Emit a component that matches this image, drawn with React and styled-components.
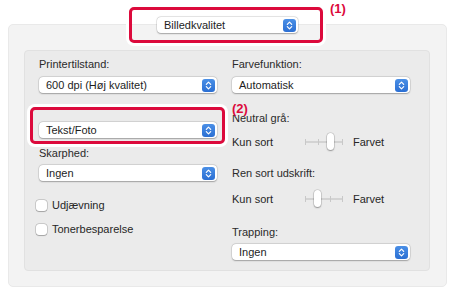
import React from 'react'
import styled, { createGlobalStyle } from 'styled-components'

const GlobalStyle = createGlobalStyle`
    html, body {
        margin: 0;
        padding: 0;
        background: #ffffff;
    }
    body {
        font-family: "Liberation Sans", Arial, sans-serif;
        font-size: 11px;
        color: #262626;
    }
`

const red = '#dc0a3c'

const Page = styled.div`
    width: 452px;
    height: 301px;
    padding-top: 7px;
    box-sizing: border-box;
    overflow: hidden;
`

const Header = styled.div`
    position: relative;
    z-index: 2;
    display: flex;
    justify-content: center;
    margin-bottom: -19px;
`

const Callout = styled.div`
    position: relative;
    z-index: 2;
    border: 3px solid ${red};
    border-radius: 5px;
    box-shadow: 0 0 0 3px #ffffff;
    padding: ${p => p.$pad};
    margin: ${p => p.$margin || '0'};
`

const Marker = styled.span`
    position: absolute;
    left: ${p => p.$left}px;
    top: ${p => p.$top}px;
    font-size: 13px;
    line-height: 13px;
    font-weight: bold;
    color: ${red};
    background: ${p => p.$bg || 'transparent'};
    white-space: nowrap;
`

const OuterPanel = styled.div`
    margin-left: 8px;
    width: 439px;
    height: 263px;
    box-sizing: border-box;
    padding: 25px 16px 15px 15px;
    background: #f3f3f3;
    border: 1px solid #e9e9e9;
    border-radius: 5px;
    display: flex;
`

const InnerPanel = styled.div`
    flex: 1;
    box-sizing: border-box;
    padding: 6px 0 0 14px;
    background: #ebebeb;
    border: 1px solid #e1e1e1;
    border-radius: 4px;
    display: grid;
    grid-template-columns: 178px 178px;
    column-gap: 15px;
    align-items: start;
`

const Column = styled.div`
    display: flex;
    flex-direction: column;
`

const Label = styled.div`
    height: 14px;
    line-height: 14px;
    margin-top: ${p => p.$mt || 0}px;
    white-space: nowrap;
    color: #2a2a2a;
`

const PopupBox = styled.div`
    display: flex;
    align-items: center;
    justify-content: space-between;
    height: 16px;
    box-sizing: border-box;
    padding: 0 2px 0 7px;
    margin-top: ${p => p.$mt || 0}px;
    width: ${p => (p.$w ? `${p.$w}px` : 'auto')};
    background: #ffffff;
    border-radius: 4px;
    box-shadow: 0 0 0 0.5px rgba(0, 0, 0, 0.12), 0 0.5px 1.5px rgba(0, 0, 0, 0.28);
    color: #1d1d1d;
    white-space: nowrap;
`

const SliderRow = styled.div`
    display: flex;
    align-items: center;
    height: 18px;
    margin-top: ${p => p.$mt || 0}px;
`

const SideText = styled.span`
    width: 73px;
    white-space: nowrap;
`

const Slider = styled.div`
    position: relative;
    width: 38px;
    height: 18px;
    margin-right: 10px;
`

const Track = styled.div`
    position: absolute;
    left: 0;
    right: 0;
    top: 8px;
    height: 2px;
    background: #d3d3d3;
    border-radius: 1px;
`

const Tick = styled.div`
    position: absolute;
    top: 6px;
    width: 1px;
    height: 6px;
    background: #c8c8c8;
`

const Thumb = styled.div`
    position: absolute;
    top: 0;
    width: 7px;
    height: 17px;
    border-radius: 4px;
    background: #ffffff;
    box-shadow: 0 0 0 0.5px rgba(0, 0, 0, 0.2), 0 1px 1.5px rgba(0, 0, 0, 0.3);
`

const CheckRow = styled.label`
    display: flex;
    align-items: center;
    gap: 5px;
    height: 14px;
    margin: ${p => p.$mt || 0}px 0 0 -3px;
    white-space: nowrap;
`

const Box = styled.span`
    width: 11px;
    height: 11px;
    border-radius: 3px;
    background: #ffffff;
    box-shadow: 0 0 0 0.5px rgba(0, 0, 0, 0.25), 0 0.5px 1px rgba(0, 0, 0, 0.2);
`

const Stepper = () => (
    <svg width="13" height="13" viewBox="0 0 13 13">
        <defs>
            <linearGradient id="stepBlue" x1="0" y1="0" x2="0" y2="1">
                <stop offset="0" stopColor="#4a8fe6" />
                <stop offset="1" stopColor="#2b6fd3" />
            </linearGradient>
        </defs>
        <rect x="0" y="0" width="13" height="13" rx="3" fill="url(#stepBlue)" />
        <path d="M4.3 5.3 L6.5 3.1 L8.7 5.3" fill="none" stroke="#fff" strokeWidth="1.2" strokeLinecap="round" strokeLinejoin="round" />
        <path d="M4.3 7.7 L6.5 9.9 L8.7 7.7" fill="none" stroke="#fff" strokeWidth="1.2" strokeLinecap="round" strokeLinejoin="round" />
    </svg>
)

const Popup = ({ value, mt, w }) => (
    <PopupBox $mt={mt} $w={w}>
        <span>{value}</span>
        <Stepper />
    </PopupBox>
)

const ToneSlider = ({ mt, step }) => (
    <SliderRow $mt={mt}>
        <SideText>Kun sort</SideText>
        <Slider>
            <Track />
            {[0, 1, 2, 3].map(i => (
                <Tick key={i} style={{ left: `${Math.min(i * 12.67, 37)}px` }} />
            ))}
            <Thumb style={{ left: `${step * 12.67 - 3.5}px` }} />
        </Slider>
        <span>Farvet</span>
    </SliderRow>
)

const Check = ({ label, mt }) => (
    <CheckRow $mt={mt}>
        <Box />
        <span>{label}</span>
    </CheckRow>
)

export default function App() {
    return (
        <Page>
            <GlobalStyle />
            <Header>
                <Callout $pad="7px 22px 7px 25px">
                    <Popup value="Billedkvalitet" w={141} />
                    <Marker $left={198} $top={-8}>(1)</Marker>
                </Callout>
            </Header>
            <OuterPanel>
                <InnerPanel>
                    <Column>
                        <Label>Printertilstand:</Label>
                        <Popup value="600 dpi (Høj kvalitet)" mt={6} />
                        <Callout $pad="12px 5px 3px 6px" $margin="14px -8px 0 -9px">
                            <Popup value="Tekst/Foto" />
                            <Marker $left={199} $top={-8} $bg="#ebebeb">(2)</Marker>
                        </Callout>
                        <Label $mt={2}>Skarphed:</Label>
                        <Popup value="Ingen" mt={5} />
                        <Check label="Udjævning" mt={17} />
                        <Check label="Tonerbesparelse" mt={10} />
                    </Column>
                    <Column>
                        <Label>Farvefunktion:</Label>
                        <Popup value="Automatisk" mt={6} />
                        <Label $mt={18}>Neutral grå:</Label>
                        <ToneSlider mt={8} step={2} />
                        <Label $mt={15}>Ren sort udskrift:</Label>
                        <ToneSlider mt={10} step={1} />
                        <Label $mt={17}>Trapping:</Label>
                        <Popup value="Ingen" mt={5} />
                    </Column>
                </InnerPanel>
            </OuterPanel>
        </Page>
    )
}
